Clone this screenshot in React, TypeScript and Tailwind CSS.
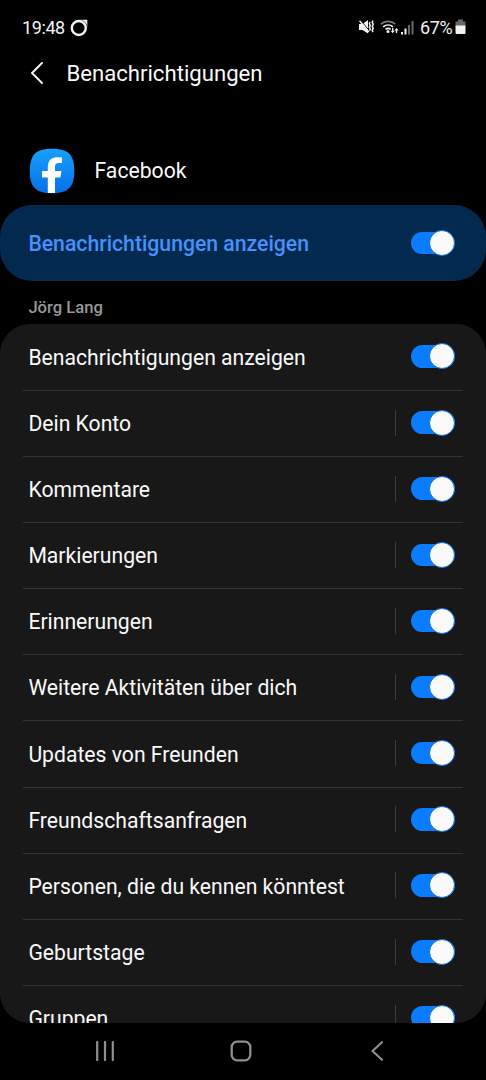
import React from 'react';

type Channel = {
  label: string;
  hasDetails: boolean;
};

const channels: Channel[] = [
  { label: 'Benachrichtigungen anzeigen', hasDetails: false },
  { label: 'Dein Konto', hasDetails: true },
  { label: 'Kommentare', hasDetails: true },
  { label: 'Markierungen', hasDetails: true },
  { label: 'Erinnerungen', hasDetails: true },
  { label: 'Weitere Aktivitäten über dich', hasDetails: true },
  { label: 'Updates von Freunden', hasDetails: true },
  { label: 'Freundschaftsanfragen', hasDetails: true },
  { label: 'Personen, die du kennen könntest', hasDetails: true },
  { label: 'Geburtstage', hasDetails: true },
  { label: 'Gruppen', hasDetails: true },
];

const Toggle = () => (
  <div className="flex h-[22.5px] w-[43.5px] shrink-0 items-center justify-end rounded-full bg-[#0a7cff]">
    <div className="-my-1 size-[26px] shrink-0 rounded-full border border-[#0a6fdf] bg-[#fafafa]"></div>
  </div>
);

const StatusBar = () => (
  <div className="flex h-[54px] items-center pl-[22px] pr-[20px] text-[#f2f2f2]">
    <span className="w-[48px] whitespace-nowrap pt-px text-[18px] leading-none tracking-[-0.4px]">19:48</span>
    <svg className="mt-px" width="18" height="18" viewBox="0 0 18 18" fill="none">
      <circle cx="8.8" cy="9" r="7" stroke="currentColor" strokeWidth="2.4" />
      <path d="M9 .8h8.300V9A8 8 0 0 0 9 .8z" fill="currentColor" />
    </svg>

    <div className="ml-auto flex items-center">
      {/* Muted with vibration */}
      <svg width="16" height="16" viewBox="0 0 16 16" fill="none">
        <path d="M0 5h3.500L9 1v13.500L3.500 11H0z" fill="currentColor" />
        <path d="M1.500 1.200 10.500 12" stroke="#000" strokeWidth="1" />
        <path d="M.5 1.800 9.800 13" stroke="currentColor" strokeWidth="1.500" />
        <path d="m11 3-.7 1.600 1 1.800-1 1.800 1 1.800-.7 1.800M14 1.500l-.8 1.800 1 2-1 2 1 2-1 2 .8 1.800" stroke="currentColor" strokeWidth="1.500" />
      </svg>
      {/* Wifi with traffic arrows */}
      <svg className="ml-[5px]" width="19" height="16" viewBox="0 0 19 16" fill="none">
        <path d="M.8 5.200a11 11 0 0 1 14.600 0" stroke="#777" strokeWidth="1.700" />
        <path d="M3.200 7.800a7.600 7.600 0 0 1 9.800 0M5.500 10.400a4.300 4.300 0 0 1 5.200 0" stroke="currentColor" strokeWidth="1.700" />
        <circle cx="8" cy="12.600" r="1.500" fill="currentColor" />
        <path d="M12.700 9v4M16.500 10.500v3.500" stroke="currentColor" strokeWidth="1.300" />
        <path d="m10.700 11.800 2 2.500 2-2.500zM14.500 11.500l2-2.500 2 2.500z" fill="currentColor" />
      </svg>
      <svg className="ml-[2px] mt-px" width="13" height="14" viewBox="0 0 13 14">
        <path d="M0 11h2v2.500H0zM3.500 7.500h2v6h-2z" fill="currentColor" />
        <path d="M7 4h2v9.500H7zM10.500 0h2v13.500h-2z" fill="#686868" />
      </svg>
      <span className="ml-[6px] w-[35px] whitespace-nowrap pt-px text-[18px] leading-none tracking-[-0.4px]">67%</span>
      <svg width="11" height="16" viewBox="0 0 11 16">
        <path d="M3 .5h5v2h2.500V7H.5V2.500H3z" fill="#686868" />
        <path d="M.5 6.500h10V14a1 1 0 0 1-1 1h-8a1 1 0 0 1-1-1z" fill="currentColor" />
      </svg>
    </div>
  </div>
);

const FacebookIcon = () => (
  <svg width="46" height="46" viewBox="0 0 46 46">
    <defs>
      <linearGradient id="fb" x1="0" y1="0" x2="0" y2="1">
        <stop offset="0" stopColor="#18a0fb" />
        <stop offset="1" stopColor="#0670ea" />
      </linearGradient>
    </defs>
    <path d="M23 .8C39.500.8 45.300 7 45.300 23S39.500 45.200 23 45.200.8 39 .8 23 6.500.8 23 .8z" fill="url(#fb)" />
    <path d="M18.800 45V29.500h-5.800V23h5.800v-3.500c0-6.800 3.300-10.300 9.200-10.300 2 0 3.500.1 4.900.3v5.500h-3.200c-2.800 0-3.700 1.300-3.700 3.600V23h6.500l-1.100 6.500H26V45z" fill="#fff" />
  </svg>
);

const App = () => {
  return (
    <div className="flex h-[1080px] w-[486px] flex-col overflow-hidden bg-black font-['Roboto',sans-serif] text-[#fafafa]">
      <StatusBar />

      <header className="flex h-[39px] items-center pl-[30px]">
        <svg className="-mt-[2px]" width="14" height="22" viewBox="0 0 14 22" fill="none">
          <path d="M12 1 2 11l10 10" stroke="#fafafa" strokeWidth="1.9" strokeLinecap="round" strokeLinejoin="round" />
        </svg>
        <h1 className="ml-[22.400px] text-[22.150px] leading-none">Benachrichtigungen</h1>
      </header>

      <div className="mt-[55px] flex h-[46px] items-center pl-[29px]">
        <FacebookIcon />
        <span className="ml-[19.500px] text-[21.200px] leading-none">Facebook</span>
      </div>

      {/* Main switch */}
      <div className="mt-[11px] flex h-[75.500px] shrink-0 items-center justify-between rounded-[32px] bg-[#03294f] pl-[28.400px] pr-[31.500px]">
        <span className="pt-[2px] text-[21.200px] font-medium leading-none text-[#4790fb]">Benachrichtigungen anzeigen</span>
        <Toggle />
      </div>

      <h2 className="flex h-[43px] shrink-0 items-center pl-[28.400px] pt-[12px] text-[16.600px] font-medium leading-none text-[#989898]">
        Jörg Lang
      </h2>

      <div className="h-[699.500px] shrink-0 overflow-hidden rounded-[30px] bg-[#181818] px-[23px] pt-[1.200px]">
        {channels.map((channel) => (
          <div
            key={channel.label}
            className="flex h-[66.130px] items-center justify-between border-b-[1.500px] border-[#333333] pb-[1.600px] pl-[5.400px] pr-[8.500px]"
          >
            <span className="pt-[2px] text-[21.170px] leading-none">{channel.label}</span>
            <div className="flex items-center">
              {channel.hasDetails && <div className="mr-[15px] h-[26px] w-px bg-[#3c3c3c]"></div>}
              <Toggle />
            </div>
          </div>
        ))}
      </div>

      <nav className="flex h-[55px] shrink-0 items-center pl-[95px] text-[#8f8f8f]">
        <svg width="20" height="20" viewBox="0 0 20 20" fill="none">
          <path d="M2.200 1v18M10 1v18M17.800 1v18" stroke="currentColor" strokeWidth="2.200" strokeLinecap="round" />
        </svg>
        <svg className="ml-[115px]" width="22" height="22" viewBox="0 0 22 22" fill="none">
          <rect x="1.700" y="1.700" width="18.600" height="18.600" rx="5.500" stroke="currentColor" strokeWidth="2.300" />
        </svg>
        <svg className="ml-[118px]" width="14" height="20" viewBox="0 0 14 20" fill="none">
          <path d="m12 1.200-9.500 8.800 9.500 8.800" stroke="currentColor" strokeWidth="2.200" strokeLinecap="round" strokeLinejoin="round" />
        </svg>
      </nav>
    </div>
  );
};

export default App;
